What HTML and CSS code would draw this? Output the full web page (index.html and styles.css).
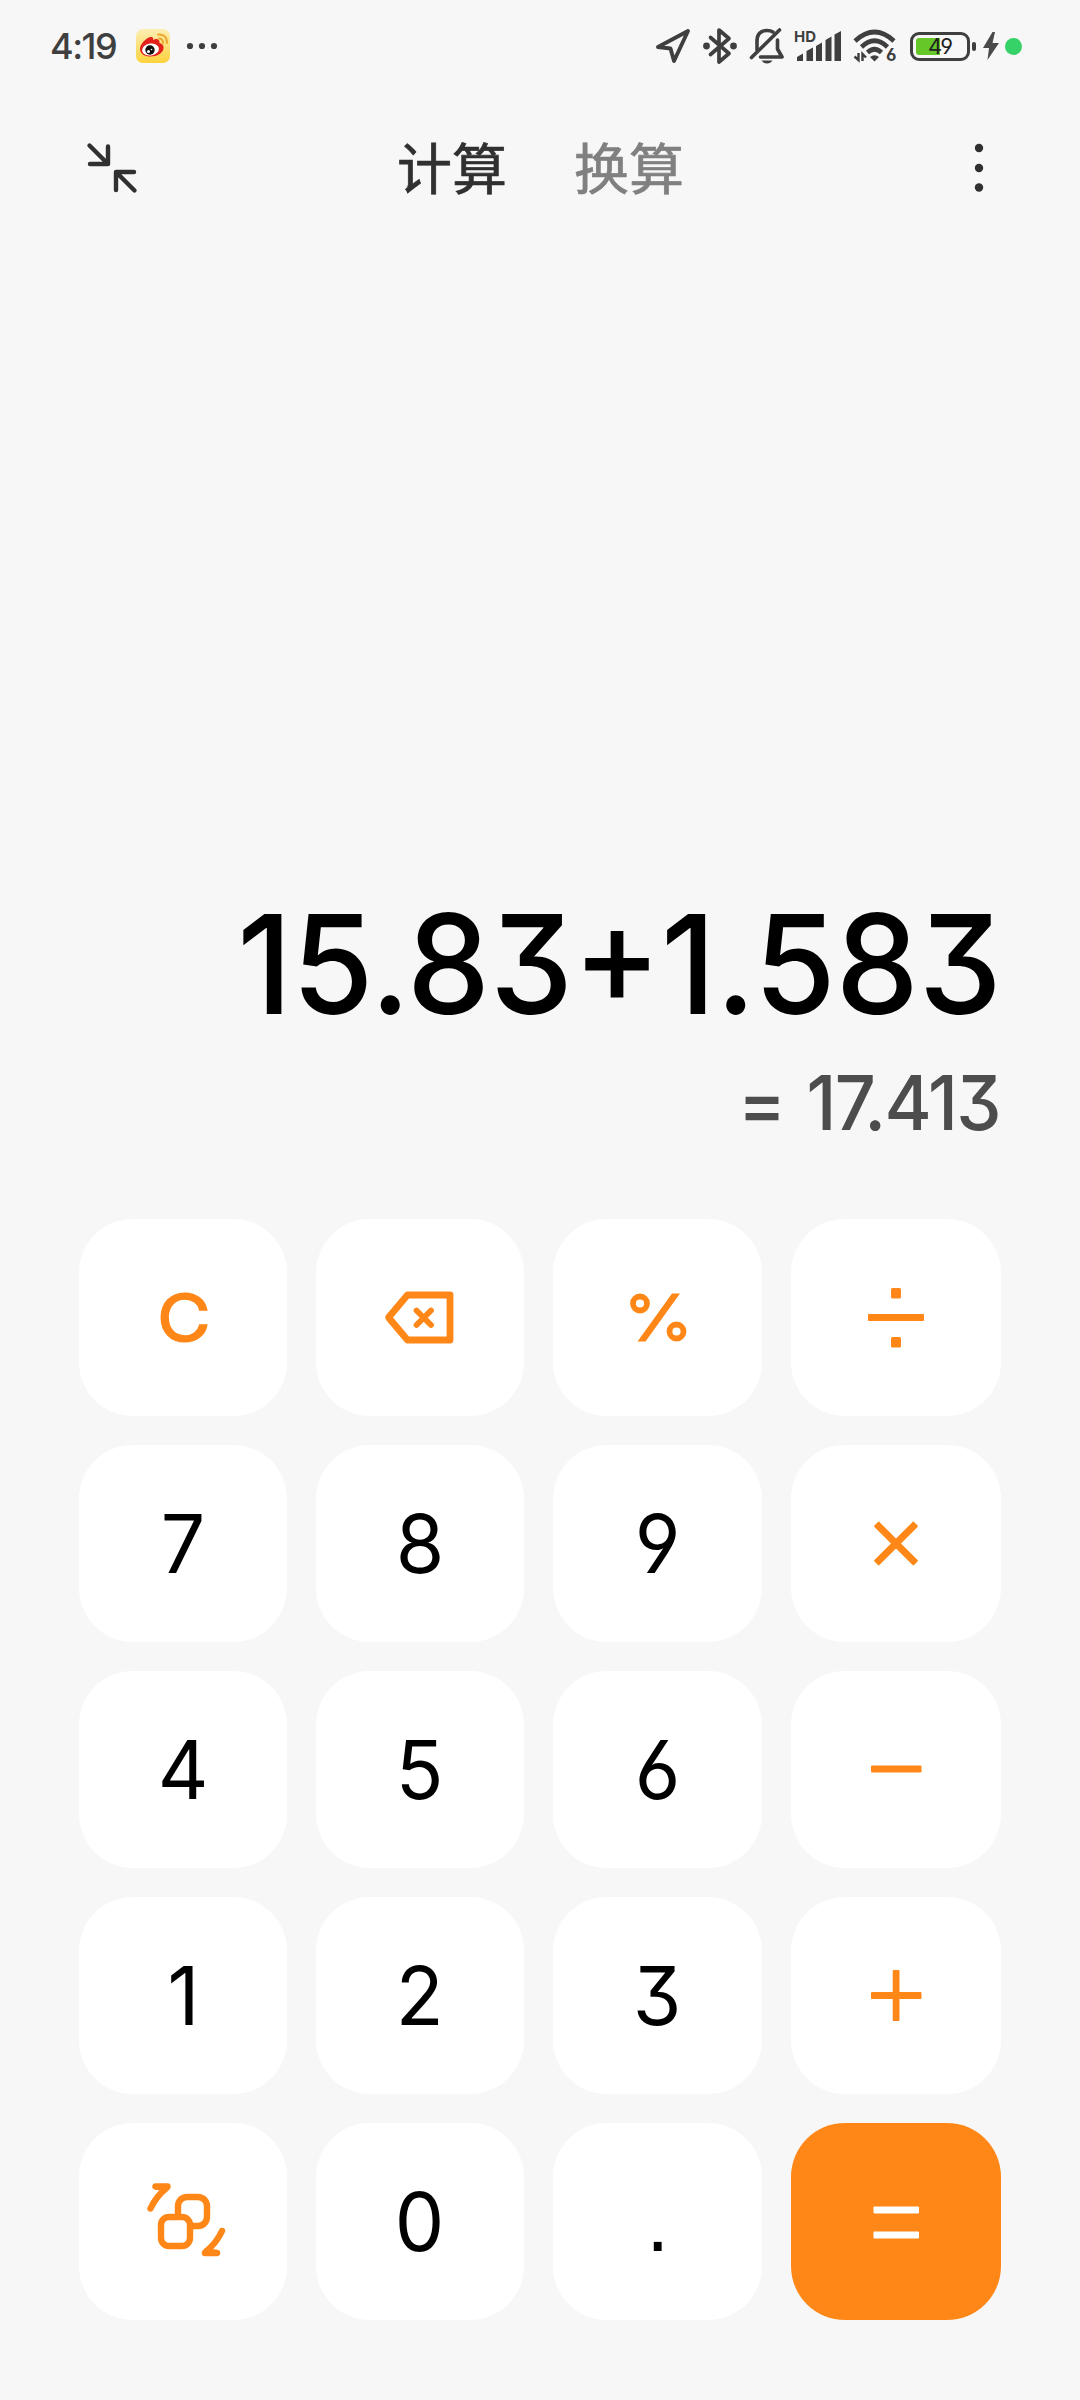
FILE: index.html
```
<!DOCTYPE html>
<html lang="zh-CN">
<head>
    <meta charset="UTF-8">
    <meta name="viewport" content="width=device-width, initial-scale=1.0">
    <title>计算器</title>
    <link rel="stylesheet" href="styles.css">
</head>
<body>
    <div class="calculator">
        <div class="status-bar">
            <span class="clock">4:19</span>
            <svg class="weibo" width="34" height="34" viewBox="0 0 34 34">
                <defs>
                    <linearGradient id="weiboBg" x1="0" y1="0" x2="0" y2="1">
                        <stop offset="0" stop-color="#fdeeb4"/>
                        <stop offset="1" stop-color="#fdd23c"/>
                    </linearGradient>
                </defs>
                <rect width="34" height="34" rx="7" fill="url(#weiboBg)"/>
                <path d="M4 20C4 15 10 9 14.500 8C17 7.500 17.500 9.500 17 11C20 9.500 24 9.500 23.500 14C26 14.500 28 16.500 27.500 19.500C27 24 21 27.500 14.500 27.500C9 27.500 4 25 4 20Z" fill="#e3201b"/>
                <ellipse cx="14.500" cy="20.500" rx="8.500" ry="6" fill="#fff" transform="rotate(-8 14.500 20.500)"/>
                <circle cx="14" cy="21" r="4.700" fill="#111"/>
                <circle cx="12.500" cy="22.500" r="1.500" fill="#fff"/>
                <circle cx="15.500" cy="20.500" r=".8" fill="#fff"/>
                <path d="M23 9.500Q27 9.500 27 14M22 5.500Q31 5 31 14" fill="none" stroke="#eda62f" stroke-width="2" stroke-linecap="round"/>
            </svg>
            <svg class="more-dots" width="32" height="8" viewBox="0 0 32 8" fill="#3f3f3f">
                <circle cx="4" cy="4" r="3.100"/>
                <circle cx="16" cy="4" r="3.100"/>
                <circle cx="28" cy="4" r="3.100"/>
            </svg>

            <div class="status-icons">
                <svg class="location" width="36" height="36" viewBox="0 0 36 36">
                    <path d="M33 3L3 19L15.500 20.500L19 33Z" fill="none" stroke="#3f3f3f" stroke-width="3.900" stroke-linejoin="round"/>
                </svg>
                <svg class="bluetooth" width="36" height="38" viewBox="0 0 36 38">
                    <path d="M8.500 10.500L27 26.500L17 35V3L27 11.500L8.500 27.500" fill="none" stroke="#3f3f3f" stroke-width="3.700" stroke-linecap="round" stroke-linejoin="round"/>
                    <circle cx="4.500" cy="19" r="3.400" fill="#3f3f3f"/>
                    <circle cx="31.500" cy="19" r="3.400" fill="#3f3f3f"/>
                </svg>
                <svg class="bell" width="36" height="38" viewBox="0 0 36 38" fill="none" stroke="#3f3f3f" stroke-width="3.600" stroke-linecap="round">
                    <path d="M8 23V14C8 7 12 3.500 18 3.500C20.500 3.500 22.500 4 24 5"/>
                    <path d="M28.500 13V22L33 30H11.500" stroke-linejoin="round"/>
                    <path d="M2.500 30.500L30.500 3"/>
                    <path d="M12.500 33.500H23.500Q21.500 36.500 18 36.500Q14.500 36.500 12.500 33.500Z" fill="#3f3f3f" stroke="none"/>
                </svg>
                <div class="signal">
                    <span class="hd">HD</span>
                    <svg width="46" height="31" viewBox="0 0 46 31" fill="#3f3f3f">
                        <path d="M1 26L7 22.500V30H1ZM10.500 20L17 16.500V30H10.500ZM20 15L26 11.500V30H20ZM29.500 9L35.500 5.500V30H29.500ZM38.500 3.500L45 0V30H38.500Z"/>
                    </svg>
                </div>
                <div class="wifi">
                    <svg width="44" height="34" viewBox="0 0 44 34">
                        <path d="M2 12Q21.500 -6 41 12M8.500 18Q21.500 5.500 34.500 18M14.500 23.500Q21.500 17 28.500 23.500" fill="none" stroke="#3f3f3f" stroke-width="4.600"/>
                        <path d="M17 28Q21.500 24.500 26 28L21.500 32.500Z" fill="#3f3f3f"/>
                        <path d="M5.500 24V31L1.500 27.500M9.500 32V25L13 28.500" fill="none" stroke="#3f3f3f" stroke-width="2.400"/>
                    </svg>
                    <span class="wifi-gen">6</span>
                </div>
                <div class="battery">
                    <div class="battery-body">
                        <div class="battery-level"></div>
                        <span class="battery-text">49</span>
                    </div>
                    <div class="battery-tip"></div>
                </div>
                <svg class="bolt" width="16" height="30" viewBox="0 0 16 30">
                    <path d="M9.500 1L0 17H6L4.500 29L16 12H9.500L12 1Z" fill="#4a4a4a"/>
                </svg>
                <div class="privacy-dot"></div>
            </div>
        </div>

        <div class="top-bar">
            <svg class="collapse" width="52" height="52" viewBox="0 0 52 52" fill="none" stroke="#303030" stroke-width="4.400" stroke-linecap="round" stroke-linejoin="round">
                <path d="M3.500 3.500L22 22M22 4.500V22H4"/>
                <path d="M48.500 48.500L30 30M30 48V30H48"/>
            </svg>
            <div class="tabs">
                <span class="tab active">计算</span>
                <span class="tab">换算</span>
            </div>
            <svg class="menu" width="10" height="50" viewBox="0 0 10 50" fill="#303030">
                <circle cx="5" cy="5" r="4.200"/>
                <circle cx="5" cy="25" r="4.200"/>
                <circle cx="5" cy="44.500" r="4.200"/>
            </svg>
        </div>

        <div class="display">
            <div class="expression">15.83+1.583</div>
            <div class="result">= 1<span class="tight">7</span>.413</div>
        </div>

        <div class="keypad">
            <button class="key clear"><span>C</span></button>
            <button class="key" aria-label="退格">
                <svg width="80" height="60" viewBox="0 0 80 60" fill="none" stroke="#ff8718" stroke-linecap="round" stroke-linejoin="round">
                    <path d="M8.500 29.500L27.500 7H70V52H27.500Z" stroke-width="6.800"/>
                    <path d="M36.500 22.500L51 37M51 22.500L36.500 37" stroke-width="5.800"/>
                </svg>
            </button>
            <button class="key" aria-label="百分号">
                <svg width="60" height="60" viewBox="0 0 60 60" fill="none" stroke="#ff8718" stroke-width="5.800">
                    <circle cx="12" cy="15.500" r="7"/>
                    <circle cx="48.500" cy="43.500" r="7"/>
                    <polygon points="44,5.500 52,5.500 17.500,53.500 9.500,53.500" fill="#ff8718" stroke="none"/>
                </svg>
            </button>
            <button class="key" aria-label="除">
                <svg width="60" height="60" viewBox="0 0 60 60" fill="#ff8718">
                    <rect x="25" y="0" width="10" height="10.500" rx="1.500"/>
                    <rect x="2" y="26" width="56" height="7" rx="1"/>
                    <rect x="25" y="49" width="10" height="10.500" rx="1.500"/>
                </svg>
            </button>

            <button class="key"><span>7</span></button>
            <button class="key"><span>8</span></button>
            <button class="key"><span>9</span></button>
            <button class="key" aria-label="乘">
                <svg width="60" height="60" viewBox="0 0 60 60" fill="#ff8718">
                    <rect x="2" y="26" width="56" height="7" rx="1" transform="rotate(45 30 29.500)"/>
                    <rect x="2" y="26" width="56" height="7" rx="1" transform="rotate(-45 30 29.500)"/>
                </svg>
            </button>

            <button class="key"><span>4</span></button>
            <button class="key"><span>5</span></button>
            <button class="key"><span>6</span></button>
            <button class="key" aria-label="减">
                <svg width="60" height="60" viewBox="0 0 60 60" fill="#ff8718">
                    <rect x="5" y="25.500" width="50.500" height="7" rx="1"/>
                </svg>
            </button>

            <button class="key"><span>1</span></button>
            <button class="key"><span>2</span></button>
            <button class="key"><span>3</span></button>
            <button class="key" aria-label="加">
                <svg width="60" height="60" viewBox="0 0 60 60" fill="#ff8718">
                    <rect x="5" y="26" width="50.500" height="7" rx="1"/>
                    <rect x="26.700" y="4" width="6.800" height="51" rx="1"/>
                </svg>
            </button>

            <button class="key" aria-label="切换">
                <svg width="100" height="100" viewBox="0 0 100 100" fill="none" stroke="#ff8718" stroke-width="6.400" stroke-linecap="round" stroke-linejoin="round">
                    <rect x="45" y="25" width="29" height="29" rx="9"/>
                    <rect x="28" y="45" width="29" height="29" rx="8" fill="#fff"/>
                    <path d="M17.500 36.500Q23 24.500 33.500 16L22.500 14.500H34.500"/>
                    <path d="M89 59Q83.500 71 73 79.500L84 81H72"/>
                </svg>
            </button>
            <button class="key"><span>0</span></button>
            <button class="key point"><span>.</span></button>
            <button class="key equals" aria-label="等于">
                <svg width="60" height="60" viewBox="0 0 60 60" fill="#fff">
                    <rect x="7.500" y="14.500" width="45.500" height="7" rx="1"/>
                    <rect x="7.500" y="39.500" width="45.500" height="7" rx="1"/>
                </svg>
            </button>
        </div>
    </div>
</body>
</html>
```
FILE: styles.css
```
* {
    margin: 0;
    padding: 0;
    box-sizing: border-box;
}

body {
    font-family: 'Inter', 'Noto Sans CJK SC', sans-serif;
    background: #f7f7f7;
    color: #000;
}

svg {
    display: block;
    flex-shrink: 0;
}

.calculator {
    width: 1080px;
    height: 2400px;
    display: flex;
    flex-direction: column;
    overflow: hidden;
}

/* Status bar */
.status-bar {
    height: 92px;
    padding: 0 58px 0 50px;
    display: flex;
    align-items: center;
    color: #3f3f3f;
}

.clock {
    width: 86px;
    font-size: 36px;
    font-weight: 500;
    line-height: 36px;
    white-space: nowrap;
    letter-spacing: -1.5px;
}

.more-dots {
    margin-left: 16px;
}

.status-icons {
    margin-left: auto;
    display: flex;
    align-items: center;
}

.bluetooth {
    margin-left: 11px;
}

.bell {
    margin-left: 11px;
}

.signal {
    position: relative;
    margin-left: 11px;
}

.hd {
    position: absolute;
    left: -2px;
    top: -2px;
    font-size: 15px;
    font-weight: 700;
    line-height: 15px;
}

.wifi {
    position: relative;
    margin-left: 11px;
}

.wifi-gen {
    position: absolute;
    left: 33px;
    top: 18px;
    font-size: 17px;
    font-weight: 700;
    line-height: 17px;
    font-feature-settings: "cv03";
}

.battery {
    margin-left: 13px;
    display: flex;
    align-items: center;
    gap: 2px;
}

.battery-body {
    position: relative;
    width: 60px;
    height: 29px;
    padding: 3px;
    border: 3px solid #3f3f3f;
    border-radius: 9px;
}

.battery-level {
    width: 24px;
    height: 17px;
    border-radius: 3px 0 0 3px;
    background: #65c728;
}

.battery-text {
    position: absolute;
    left: 0;
    top: 0;
    width: 100%;
    font-size: 22px;
    line-height: 23px;
    letter-spacing: -1px;
    text-align: center;
    color: #222;
    font-feature-settings: "cv04";
}

.battery-tip {
    width: 4px;
    height: 9px;
    border-radius: 2px;
    background: #3f3f3f;
}

.bolt {
    margin-left: 7px;
}

.privacy-dot {
    width: 17px;
    height: 17px;
    margin-left: 6px;
    border-radius: 50%;
    background: #36d167;
}

/* Header */
.top-bar {
    height: 152px;
    padding: 0 96px 0 86px;
    display: flex;
    align-items: center;
    justify-content: space-between;
}

.tabs {
    display: flex;
    gap: 67px;
    margin-right: 31px;
    margin-bottom: 7px;
}

.tab {
    font-family: 'Noto Sans CJK SC', sans-serif;
    font-size: 55px;
    line-height: 80px;
    color: #808080;
    -webkit-text-stroke: 0.7px #808080;
}

.tab.active {
    color: #303030;
    -webkit-text-stroke-color: #303030;
}

/* Expression and result */
.display {
    height: 975px;
    padding: 0 78px 76px 0;
    display: flex;
    flex-direction: column;
    align-items: flex-end;
    justify-content: flex-end;
    gap: 29px;
    font-feature-settings: "cv09", "cv03", "cv04";
    white-space: nowrap;
}

.expression {
    font-size: 138px;
    font-weight: 500;
    line-height: 140px;
    transform: scaleX(0.956);
    transform-origin: right;
}

.result {
    margin-right: 2px;
    font-size: 75px;
    font-weight: 500;
    line-height: 80px;
    letter-spacing: -1.8px;
    word-spacing: 5px;
    color: #4d4d4d;
    transform: scaleX(0.96);
    transform-origin: right;
}

.tight {
    letter-spacing: -12px;
}

/* Keys */
.keypad {
    padding: 0 79px;
    display: grid;
    grid-template-columns: 208px 208px 209px 210px;
    grid-auto-rows: 197px;
    gap: 29px;
}

.key {
    display: flex;
    align-items: center;
    justify-content: center;
    border: none;
    border-radius: 54px;
    background: #fff;
    color: #000;
    font-family: inherit;
    font-size: 81px;
    font-feature-settings: "cv09", "cv03", "cv04";
}

.key span {
    transform: scaleX(0.97);
}

.clear {
    color: #ff8718;
    font-size: 65px;
    font-weight: 300;
    -webkit-text-stroke: 3.2px #ff8718;
    stroke-linejoin: round;
}

.clear span {
    transform: translateX(1px) scaleX(1.1);
}

.point {
    font-family: 'Liberation Sans', sans-serif;
    font-size: 85px;
}

.equals {
    background: #ff8718;
}
```
